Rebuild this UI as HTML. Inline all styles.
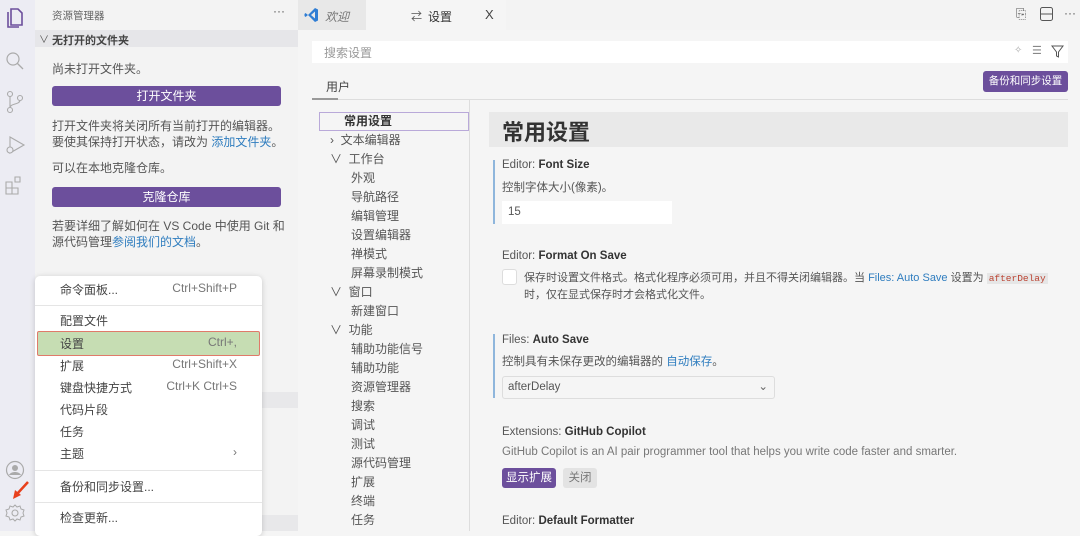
<!DOCTYPE html><html><head><meta charset="utf-8"><style>
*{box-sizing:border-box;margin:0;padding:0}
body{width:1080px;height:531px;overflow:hidden;position:relative;background:#f5f5f5;font-family:"Liberation Sans","Noto Sans CJK SC",sans-serif;font-size:12px;color:#555}
.a{position:absolute}
.btn{position:absolute;background:#6c4f9c;color:#fff;border-radius:3px;text-align:center}
.link{color:#2f7dbf}
.mi{position:absolute;left:60px;width:180px;font-size:12px;color:#444}
.mi span{position:absolute;right:3px;color:#777}
.sep{position:absolute;left:35px;width:227px;height:1px;background:#e5e5e5}
.toc{position:absolute;font-size:12px;color:#555;line-height:19px}
.t{font-size:11.5px;color:#555}.t b{color:#333;font-weight:bold}
</style></head><body>
<div class="a" style="left:0;top:0;width:35px;height:531px;background:#ececf3"></div>
<svg class="a" style="left:4px;top:6px" width="22" height="24" viewBox="0 0 22 24"><path d="M7 3h7l4 4v12H7z M4 6v15h11" fill="none" stroke="#6c4f9c" stroke-width="1.6"/></svg>
<svg class="a" style="left:5px;top:51px" width="20" height="20"><circle cx="8" cy="8" r="6" fill="none" stroke="#aaa" stroke-width="1.2"/><path d="M12 12l6 6" stroke="#aaa" stroke-width="1.3"/></svg>
<svg class="a" style="left:5px;top:90px" width="20" height="24"><circle cx="5" cy="4" r="2.5" fill="none" stroke="#aaa" stroke-width="1.1"/><circle cx="5" cy="20" r="2.5" fill="none" stroke="#aaa" stroke-width="1.1"/><circle cx="15" cy="8" r="2.5" fill="none" stroke="#aaa" stroke-width="1.1"/><path d="M5 6v12M15 10c0 5-10 3-10 8" fill="none" stroke="#aaa" stroke-width="1.1"/></svg>
<svg class="a" style="left:4px;top:134px" width="22" height="22"><path d="M6 3l14 8-14 8z" fill="none" stroke="#aaa" stroke-width="1.1"/><circle cx="6" cy="16" r="3" fill="#ececf3" stroke="#aaa" stroke-width="1.1"/></svg>
<svg class="a" style="left:5px;top:175px" width="20" height="20"><path d="M1 7h6v6H1zM7 13h6v6H7zM1 13h6v6H1zM10 2l5 0 0 5-5 0z" fill="none" stroke="#aaa" stroke-width="1.1"/></svg>
<svg class="a" style="left:5px;top:460px" width="20" height="20"><circle cx="10" cy="10" r="8.5" fill="none" stroke="#aaa" stroke-width="1.2"/><circle cx="10" cy="8" r="3" fill="#aaa"/><path d="M4 15c2-4 10-4 12 0" fill="#aaa"/></svg>
<svg class="a" style="left:5px;top:503px" width="20" height="20"><circle cx="10" cy="10" r="3" fill="none" stroke="#aaa" stroke-width="1.1"/><path d="M10 2l2 2 3-1 1 3 3 1-1 3 1 3-3 1-1 3-3-1-2 2-2-2-3 1-1-3-3-1 1-3-1-3 3-1 1-3 3 1z" fill="none" stroke="#aaa" stroke-width="1"/></svg>
<svg class="a" style="left:10px;top:480px" width="22" height="22"><path d="M18 2L7 14" stroke="#e8401c" stroke-width="2.5"/><path d="M3 19l2-9 6 5z" fill="#e8401c"/></svg>
<div class="a" style="left:35px;top:0;width:263px;height:531px;background:#f3f3f3"></div>
<div class="a" style="left:52px;top:8px;font-size:10.5px;color:#666">资源管理器</div>
<div class="a" style="left:273px;top:4px;font-size:12px;color:#555">···</div>
<div class="a" style="left:35px;top:30px;width:263px;height:17px;background:#e6e6e9"></div>
<div class="a" style="left:39px;top:31px;font-size:10px;color:#555">∨</div>
<div class="a" style="left:52px;top:32px;font-size:11px;font-weight:bold;color:#444">无打开的文件夹</div>
<div class="a" style="left:52px;top:60px;font-size:12px">尚未打开文件夹。</div>
<div class="btn" style="left:52px;top:86px;width:229px;height:20px;line-height:20px">打开文件夹</div>
<div class="a" style="left:52px;top:118px;font-size:12px;line-height:16px;width:235px">打开文件夹将关闭所有当前打开的编辑器。要使其保持打开状态，请改为 <span class="link">添加文件夹</span>。</div>
<div class="a" style="left:52px;top:159px;font-size:12px">可以在本地克隆仓库。</div>
<div class="btn" style="left:52px;top:187px;width:229px;height:20px;line-height:20px">克隆仓库</div>
<div class="a" style="left:52px;top:218px;font-size:12px;line-height:16px;width:235px">若要详细了解如何在 VS Code 中使用 Git 和源代码管理<span class="link">参阅我们的文档</span>。</div>
<div class="a" style="left:262px;top:392px;width:36px;height:16px;background:#e8e8ea"></div>
<div class="a" style="left:262px;top:515px;width:36px;height:16px;background:#e8e8ea"></div>
<div class="a" style="left:35px;top:276px;width:227px;height:260px;background:#fff;border-radius:5px;box-shadow:0 1px 6px rgba(0,0,0,.18)"></div>
<div class="mi" style="top:281px">命令面板...<span>Ctrl+Shift+P</span></div>
<div class="sep" style="top:305px"></div>
<div class="mi" style="top:312px">配置文件</div>
<div class="a" style="left:37px;top:331px;width:223px;height:25px;background:#c6ddb3;border:1px solid #e07a6a;border-radius:2px"></div>
<div class="mi" style="top:335px">设置<span>Ctrl+,</span></div>
<div class="mi" style="top:357px">扩展<span>Ctrl+Shift+X</span></div>
<div class="mi" style="top:379px">键盘快捷方式<span>Ctrl+K Ctrl+S</span></div>
<div class="mi" style="top:401px">代码片段</div>
<div class="mi" style="top:423px">任务</div>
<div class="mi" style="top:445px">主题<span>›</span></div>
<div class="sep" style="top:470px"></div>
<div class="mi" style="top:478px">备份和同步设置...</div>
<div class="sep" style="top:502px"></div>
<div class="mi" style="top:509px">检查更新...</div>
<div class="a" style="left:298px;top:0;width:782px;height:30px;background:#f3f3f3"></div>
<div class="a" style="left:298px;top:0;width:68px;height:30px;background:#e8e8e8"></div>
<svg class="a" style="left:304px;top:7px" width="16" height="16"><path d="M11 1L4 8l7 7 3-1.5v-11z M11 4.5L7 8l4 3.5z M4 8L1.5 6 .5 7v2l1 1z" fill="#2f7dd4" fill-rule="evenodd"/></svg>
<div class="a" style="left:325px;top:8px;font-size:12px;font-style:italic;color:#777">欢迎</div>
<div class="a" style="left:366px;top:0;width:140px;height:30px;background:#f5f5f5"></div>
<div class="a" style="left:411px;top:8px;font-size:11px;color:#555">⇄</div>
<div class="a" style="left:428px;top:8px;font-size:12px;color:#333">设置</div>
<div class="a" style="left:485px;top:7px;font-size:13px;color:#444">X</div>
<div class="a" style="left:1016px;top:6px;font-size:13px;color:#555">⎘</div>
<svg class="a" style="left:1040px;top:7px" width="13" height="14"><rect x=".5" y=".5" width="12" height="13" rx="2" fill="none" stroke="#555"/><path d="M0 7h13" stroke="#555"/></svg>
<div class="a" style="left:1064px;top:6px;font-size:12px;color:#555">···</div>
<div class="a" style="left:312px;top:41px;width:756px;height:22px;background:#fff"></div>
<div class="a" style="left:324px;top:44px;font-size:12px;color:#999">搜索设置</div>
<div class="a" style="left:1014px;top:45px;font-size:10px;color:#aaa">✧</div>
<div class="a" style="left:1032px;top:44px;font-size:11px;color:#888">☰</div>
<svg class="a" style="left:1051px;top:45px" width="13" height="13"><path d="M1 1h11L7.5 7v5l-2-1V7z" fill="none" stroke="#555"/></svg>
<div class="a" style="left:326px;top:78px;font-size:12px;color:#444">用户</div>
<div class="a" style="left:312px;top:99px;width:756px;height:1px;background:#ddd"></div>
<div class="a" style="left:312px;top:98px;width:26px;height:2px;background:#999"></div>
<div class="btn" style="left:983px;top:71px;width:85px;height:21px;line-height:21px;font-size:10.5px;white-space:nowrap">备份和同步设置</div>
<div class="a" style="left:319px;top:112px;width:150px;height:19px;border:1px solid #b9a9d9"></div>
<div class="a" style="left:469px;top:100px;width:1px;height:431px;background:#ddd"></div>
<div class="toc" style="left:344px;top:112px;font-weight:bold;color:#333">常用设置</div>
<div class="toc" style="left:330px;top:131px">›&nbsp; 文本编辑器<br>∨&nbsp; 工作台</div>
<div class="toc" style="left:351px;top:169px">外观<br>导航路径<br>编辑管理<br>设置编辑器<br>禅模式<br>屏幕录制模式</div>
<div class="toc" style="left:330px;top:283px">∨&nbsp; 窗口</div>
<div class="toc" style="left:351px;top:302px">新建窗口</div>
<div class="toc" style="left:330px;top:321px">∨&nbsp; 功能</div>
<div class="toc" style="left:351px;top:340px">辅助功能信号<br>辅助功能<br>资源管理器<br>搜索<br>调试<br>测试<br>源代码管理<br>扩展<br>终端<br>任务</div>
<div class="a" style="left:489px;top:112px;width:579px;height:35px;background:#e9e9e9"></div>
<div class="a" style="left:502px;top:115px;font-size:22px;font-weight:bold;color:#333">常用设置</div>
<div class="a" style="left:493px;top:160px;width:2px;height:64px;background:#8fb6dc"></div>
<div class="a t" style="left:502px;top:159px">Editor: <b>Font Size</b></div>
<div class="a t" style="left:502px;top:179px">控制字体大小(像素)。</div>
<div class="a" style="left:502px;top:201px;width:170px;height:23px;background:#fff;padding:5px 6px;font-size:11.5px">15</div>
<div class="a t" style="left:502px;top:250px">Editor: <b>Format On Save</b></div>
<div class="a" style="left:502px;top:269px;width:15px;height:16px;background:#fff;border:1px solid #ddd;border-radius:3px"></div>
<div class="a t" style="left:524px;top:270px;line-height:16px;white-space:nowrap;font-size:11px">保存时设置文件格式。格式化程序必须可用，并且不得关闭编辑器。当 <span class="link">Files: Auto Save</span> 设置为 <span style="background:#e6e6e6;color:#b43;font-family:'Liberation Mono',monospace;font-size:9.5px;padding:0 2px">afterDelay</span><br>时，仅在显式保存时才会格式化文件。</div>
<div class="a" style="left:493px;top:334px;width:2px;height:64px;background:#8fb6dc"></div>
<div class="a t" style="left:502px;top:334px">Files: <b>Auto Save</b></div>
<div class="a t" style="left:502px;top:353px">控制具有未保存更改的编辑器的 <span class="link">自动保存</span>。</div>
<div class="a" style="left:502px;top:376px;width:273px;height:23px;background:#f5f5f5;border:1px solid #ddd;border-radius:3px;padding:4px 5px;font-size:11.5px">afterDelay<span style="position:absolute;right:6px;top:2px;color:#666">⌄</span></div>
<div class="a t" style="left:502px;top:426px">Extensions: <b>GitHub Copilot</b></div>
<div class="a t" style="left:502px;top:446px;color:#777">GitHub Copilot is an AI pair programmer tool that helps you write code faster and smarter.</div>
<div class="btn" style="left:502px;top:468px;width:54px;height:20px;line-height:20px;font-size:11.5px">显示扩展</div>
<div class="a" style="left:563px;top:468px;width:34px;height:20px;line-height:20px;background:#e3e3e3;border-radius:3px;text-align:center;font-size:11.5px;color:#777">关闭</div>
<div class="a t" style="left:502px;top:515px">Editor: <b>Default Formatter</b></div>
</body></html>
